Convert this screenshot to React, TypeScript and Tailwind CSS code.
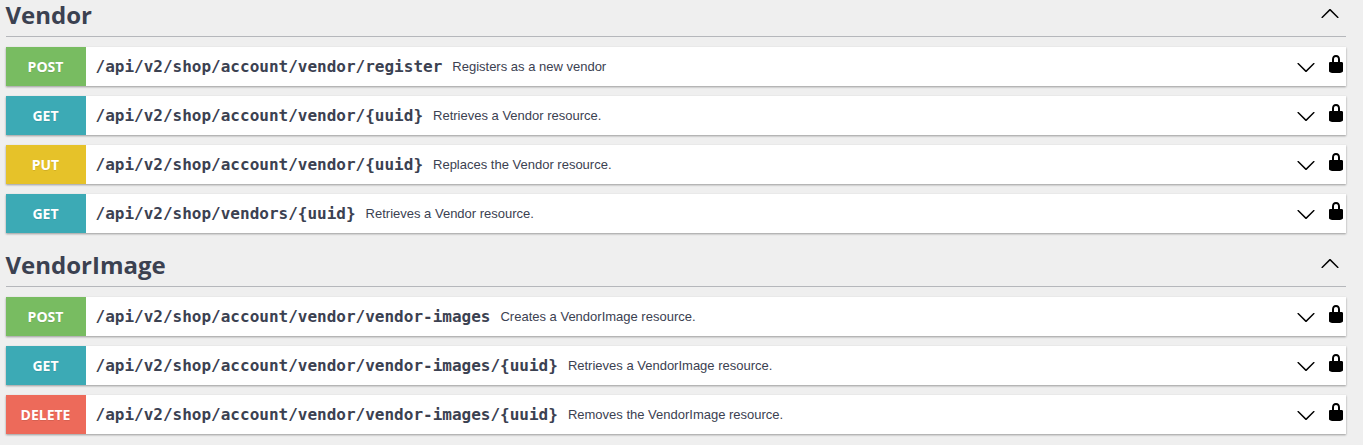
import React from 'react';

type Method = 'POST' | 'GET' | 'PUT' | 'DELETE';
type Operation = { method: Method; path: string; summary: string };

const colors: Record<Method, string> = {
  POST: 'bg-[#78bc61]',
  GET: 'bg-[#3caab5]',
  PUT: 'bg-[#e6c229]',
  DELETE: 'bg-[#ed6a5a]',
};

const groups: { name: string; operations: Operation[] }[] = [
  {
    name: 'Vendor',
    operations: [
      { method: 'POST', path: '/api/v2/shop/account/vendor/register', summary: 'Registers as a new vendor' },
      { method: 'GET', path: '/api/v2/shop/account/vendor/{uuid}', summary: 'Retrieves a Vendor resource.' },
      { method: 'PUT', path: '/api/v2/shop/account/vendor/{uuid}', summary: 'Replaces the Vendor resource.' },
      { method: 'GET', path: '/api/v2/shop/vendors/{uuid}', summary: 'Retrieves a Vendor resource.' },
    ],
  },
  {
    name: 'VendorImage',
    operations: [
      { method: 'POST', path: '/api/v2/shop/account/vendor/vendor-images', summary: 'Creates a VendorImage resource.' },
      { method: 'GET', path: '/api/v2/shop/account/vendor/vendor-images/{uuid}', summary: 'Retrieves a VendorImage resource.' },
      { method: 'DELETE', path: '/api/v2/shop/account/vendor/vendor-images/{uuid}', summary: 'Removes the VendorImage resource.' },
    ],
  },
];

const ARROW =
  'M17.418 6.109c.272-.268.709-.268.979 0s.271.701 0 .969l-7.908 7.83c-.27.268-.707.268-.979 0l-7.908-7.83c-.27-.268-.27-.701 0-.969.271-.268.709-.268.979 0L10 13.25l7.418-7.141z';

function Arrow({ up = false }: { up?: boolean }) {
  return (
    <svg viewBox="0 0 20 20" className={up ? 'size-5 rotate-180' : 'size-5'}>
      <path d={ARROW} />
    </svg>
  );
}

function Lock() {
  return (
    <svg viewBox="0 0 20 20" className="size-5">
      <path d="M15.8 8H14V5.6C14 2.703 12.665 1 10 1 7.334 1 6 2.703 6 5.6V8H4c-.553 0-1 .646-1 1.199V17c0 .549.428 1.139.951 1.307l1.197.387C5.672 18.861 6.55 19 7.1 19h5.8c.549 0 1.428-.139 1.951-.307l1.196-.387c.524-.167.953-.757.953-1.306V9.199C17 8.646 16.352 8 15.8 8zM12 8H8V5.199C8 3.754 8.797 3 10 3c1.203 0 2 .754 2 2.199V8z" />
    </svg>
  );
}

function Row({ method, path, summary }: Operation) {
  return (
    <div className="flex h-[39px] items-center bg-white shadow-[0_1px_2px_rgba(0,0,0,0.36)]">
      <div
        className={`flex h-full w-20 items-center justify-center font-['Open_Sans',sans-serif] text-sm font-bold text-white [text-shadow:0_1px_0_rgba(0,0,0,0.1)] ${colors[method]}`}
      >
        {method}
      </div>
      <code className="ml-2.5 font-['DejaVu_Sans_Mono',monospace] text-base leading-5 font-bold">{path}</code>
      <span className="ml-2.5 grow font-['Liberation_Sans',sans-serif] text-[13px]">{summary}</span>
      <Arrow />
      <div className="ml-2.5 mb-1.5">
        <Lock />
      </div>
    </div>
  );
}

export default function App() {
  return (
    <main className="h-[445px] overflow-hidden bg-[#efefef] pr-[17px] pl-[5.5px] text-[#3b4151]">
      {groups.map((group) => (
        <section key={group.name} className="mb-[17px]">
          <header className="mb-2.5 flex h-[37px] items-start justify-between border-b border-[#b5b7bb] pr-1.5">
            <h2 className="font-['Open_Sans',sans-serif] text-2xl leading-[30px] font-bold">{group.name}</h2>
            <div className="pt-1">
              <Arrow up />
            </div>
          </header>
          <div className="flex flex-col gap-2.5">
            {group.operations.map((op) => (
              <Row key={op.method + op.path} {...op} />
            ))}
          </div>
        </section>
      ))}
    </main>
  );
}
